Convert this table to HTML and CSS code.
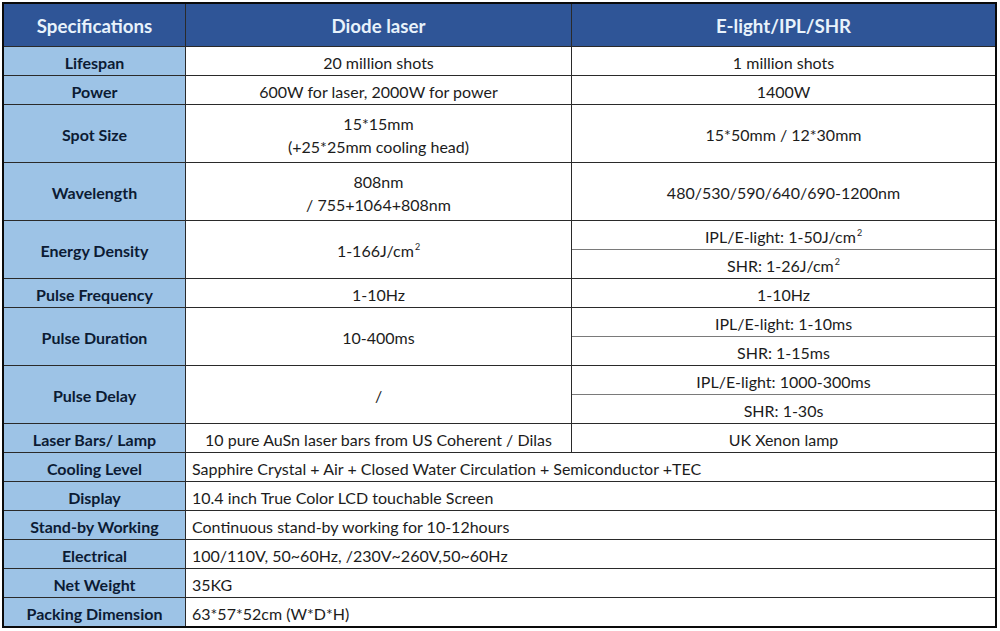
FILE: index.html
```html
<!DOCTYPE html>
<html>
<head>
<meta charset="utf-8">
<link rel="stylesheet" href="styles.css">
</head>
<body>
<div class="page">
  <div class="spec">
    <div class="cell hd">Specifications</div>
    <div class="cell hd">Diode laser</div>
    <div class="cell hd">E-light/IPL/SHR</div>

    <div class="cell lb">Lifespan</div>
    <div class="cell c">20 million shots</div>
    <div class="cell c">1 million shots</div>

    <div class="cell lb">Power</div>
    <div class="cell c">600W for laser, 2000W for power</div>
    <div class="cell c">1400W</div>

    <div class="cell lb tall">Spot Size</div>
    <div class="cell c tall two"><span>15*15mm<br>(+25*25mm cooling head)</span></div>
    <div class="cell c tall">15*50mm / 12*30mm</div>

    <div class="cell lb tall">Wavelength</div>
    <div class="cell c tall two"><span>808nm<br>/ 755+1064+808nm</span></div>
    <div class="cell c tall">480/530/590/640/690-1200nm</div>

    <div class="cell lb tall">Energy Density</div>
    <div class="cell c tall"><span>1-166J/cm<sup>2</sup></span></div>
    <div class="cell tall split">
      <div class="sub"><span>IPL/E-light: 1-50J/cm<sup>2</sup></span></div>
      <div class="sub"><span>SHR: 1-26J/cm<sup>2</sup></span></div>
    </div>

    <div class="cell lb">Pulse Frequency</div>
    <div class="cell c">1-10Hz</div>
    <div class="cell c">1-10Hz</div>

    <div class="cell lb tall">Pulse Duration</div>
    <div class="cell c tall">10-400ms</div>
    <div class="cell tall split">
      <div class="sub">IPL/E-light: 1-10ms</div>
      <div class="sub">SHR: 1-15ms</div>
    </div>

    <div class="cell lb tall">Pulse Delay</div>
    <div class="cell c tall">/</div>
    <div class="cell tall split">
      <div class="sub">IPL/E-light: 1000-300ms</div>
      <div class="sub">SHR: 1-30s</div>
    </div>

    <div class="cell lb">Laser Bars/ Lamp</div>
    <div class="cell c">10 pure AuSn laser bars from US Coherent / Dilas</div>
    <div class="cell c">UK Xenon lamp</div>

    <div class="cell lb">Cooling Level</div>
    <div class="cell l wide">Sapphire Crystal + Air + Closed Water Circulation + Semiconductor +TEC</div>

    <div class="cell lb">Display</div>
    <div class="cell l wide">10.4 inch True Color LCD touchable Screen</div>

    <div class="cell lb">Stand-by Working</div>
    <div class="cell l wide">Continuous stand-by working for 10-12hours</div>

    <div class="cell lb">Electrical</div>
    <div class="cell l wide">100/110V, 50~60Hz, /230V~260V,50~60Hz</div>

    <div class="cell lb">Net Weight</div>
    <div class="cell l wide">35KG</div>

    <div class="cell lb">Packing Dimension</div>
    <div class="cell l wide">63*57*52cm (W*D*H)</div>
  </div>
</div>
</body>
</html>
```

FILE: styles.css
```css
html, body {
  margin: 0;
  padding: 0;
  background: #ffffff;
}

.page {
  padding: 2px 0 0 2px;
}

.spec {
  width: 995px;
  box-sizing: border-box;
  border: 2px solid #0a0a0a;
  background: #2a2a2a;
  display: grid;
  grid-template-columns: 181px 385px 1fr;
  grid-template-rows: 42px repeat(20, 28px);
  gap: 1px;
  font-family: Lato, "Liberation Sans", sans-serif;
  font-size: 16px;
  color: #1c1c1c;
}

.cell {
  background: #ffffff;
  display: flex;
  align-items: center;
  white-space: nowrap;
  padding-top: 2px;
  box-sizing: border-box;
}

.hd {
  background: #2f5597;
  color: #e8f2fb;
  font-weight: bold;
  font-size: 18.7px;
  justify-content: center;
  padding-top: 1px;
}

.lb {
  background: #9dc3e6;
  color: #0c1b34;
  font-weight: bold;
  font-size: 16px;
  justify-content: center;
}

.c {
  justify-content: center;
  text-align: center;
}

.l {
  justify-content: flex-start;
  padding-left: 6px;
}

.tall {
  grid-row: span 2;
}

.wide {
  grid-column: span 2;
}

.two {
  line-height: 23px;
}

.split {
  flex-direction: column;
  align-items: stretch;
  background: #7a7a7a;
  gap: 1px;
  padding-top: 0;
}

.sub {
  flex: 1;
  background: #ffffff;
  display: flex;
  align-items: center;
  justify-content: center;
  padding-top: 2px;
}

sup {
  font-size: 9px;
  line-height: 0;
  vertical-align: 7px;
  margin-left: 1px;
}
```
